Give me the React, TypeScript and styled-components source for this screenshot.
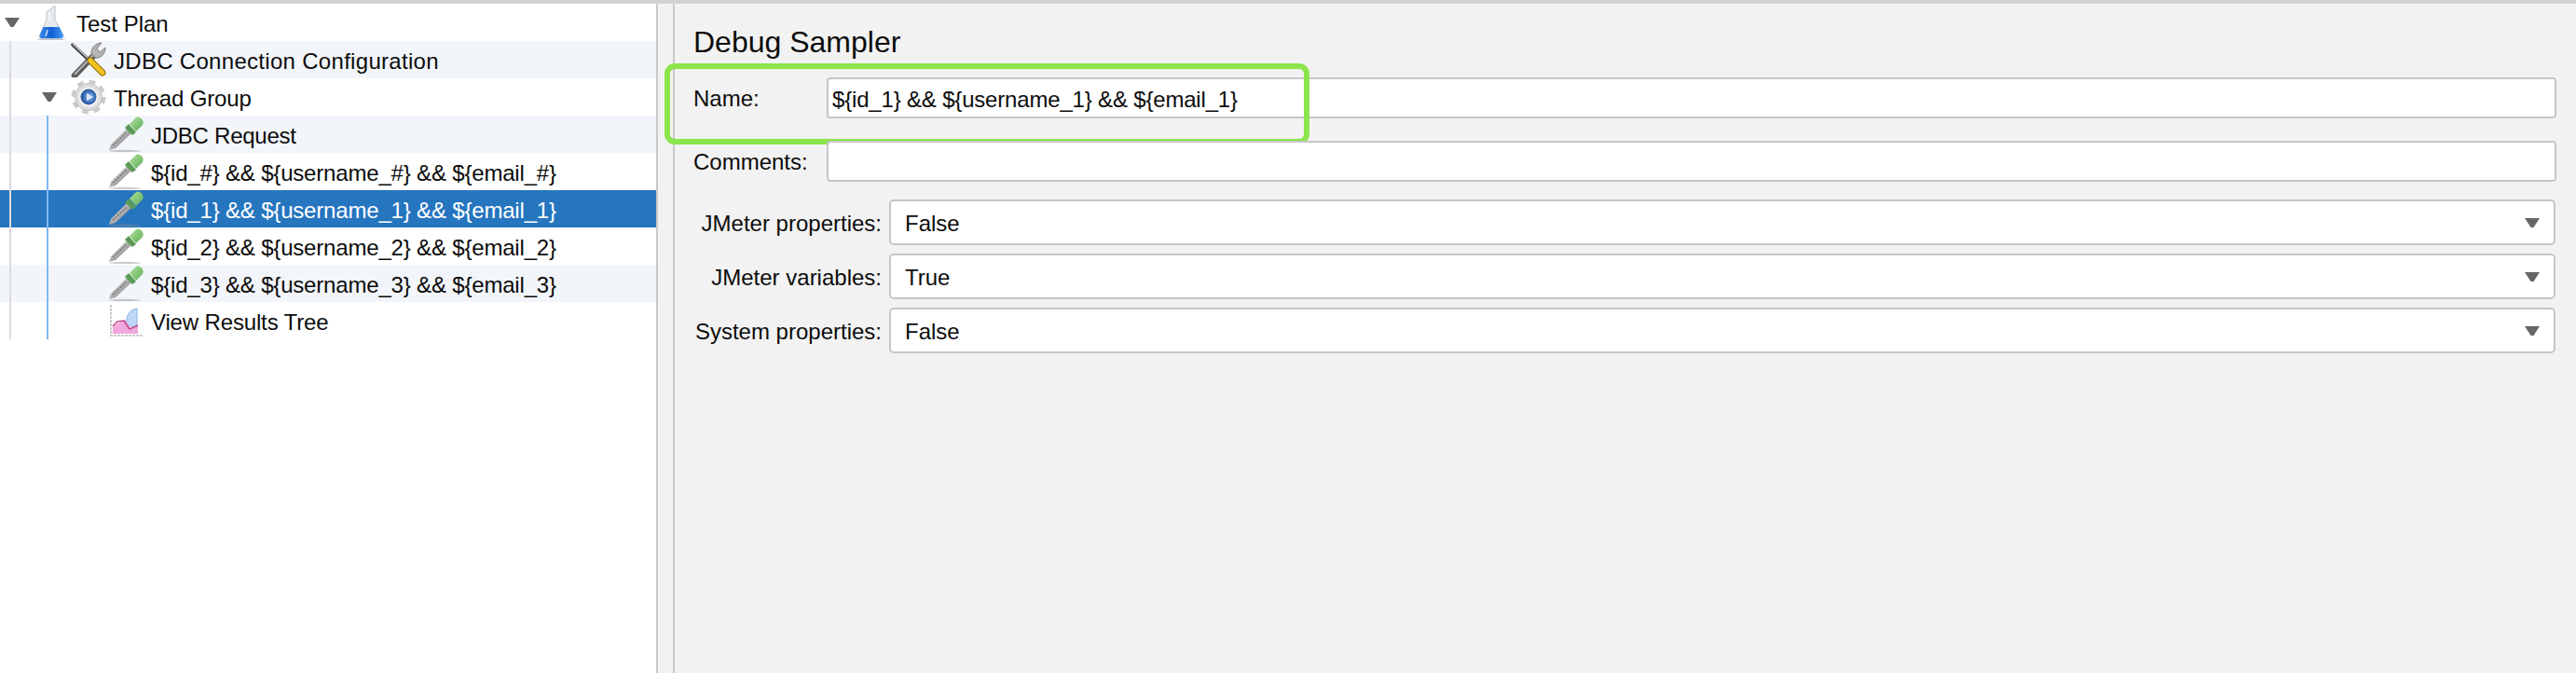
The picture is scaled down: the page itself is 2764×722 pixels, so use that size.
import React from 'react';
import styled, { createGlobalStyle } from 'styled-components';

const Global = createGlobalStyle`
  html, body { margin: 0; padding: 0; height: 100%; overflow: hidden; background: #fff; }
  #root { height: 100%; }
  * { box-sizing: border-box; }
`;

const Shell = styled.div`
  display: flex;
  height: 722px;
  width: 2764px;
  border-top: 4px solid #d2d2d2;
  font-family: "Liberation Sans", Arial, sans-serif;
  font-size: 24px;
  color: #0c0c0c;
`;

const TreePane = styled.div`
  position: relative;
  flex: 0 0 704px;
  background: #fff;
`;

const Row = styled.div<{ $depth: number; $striped?: boolean; $selected?: boolean }>`
  display: flex;
  align-items: center;
  height: 40px;
  padding-left: ${p => p.$depth * 40 + 4}px;
  background: ${p => (p.$selected ? '#2675bf' : p.$striped ? '#f2f5fa' : '#fff')};
  color: ${p => (p.$selected ? '#fff' : '#0c0c0c')};
`;

const ArrowSlot = styled.span`
  display: flex;
  align-items: center;
  flex: 0 0 32px;
  padding-left: 1px;
  height: 100%;
`;

const IconSlot = styled.span`
  display: flex;
  flex: 0 0 38px;
  height: 38px;
  margin-right: 8px;
  filter: blur(0.4px);
`;

const Label = styled.span<{ $tracking: number }>`
  white-space: pre;
  line-height: 40px;
  padding-top: 3px;
  letter-spacing: ${p => p.$tracking}px;
`;

const Guide = styled.div<{ $left: number; $top: number; $color: string }>`
  position: absolute;
  left: ${p => p.$left}px;
  top: ${p => p.$top}px;
  bottom: 358px;
  width: 2px;
  background: ${p => p.$color};
`;

const Splitter = styled.div`
  flex: 0 0 20px;
  background: #f2f2f2;
  border-left: 2px solid #c9c9c9;
  border-right: 2px solid #c9c9c9;
`;

const FormPane = styled.div`
  flex: 1;
  display: flex;
  flex-direction: column;
  background: #f2f2f2;
  padding: 0 21px 0 20px;
`;

const Title = styled.h1`
  margin: 0;
  height: 79px;
  padding-top: 21px;
  font-size: 32px;
  line-height: 40px;
  font-weight: 400;
`;

const TextRow = styled.div`
  position: relative;
  display: flex;
  align-items: center;
  height: 44px;
  margin-bottom: 24px;
`;

const TextLabel = styled.label`
  flex: 0 0 143px;
  padding-top: 2px;
`;

const Field = styled.div`
  flex: 1;
  height: 44px;
  line-height: 43px;
  padding-left: 4px;
  background: #fff;
  border: 2px solid #c6c6c6;
  border-radius: 4px;
  white-space: pre;
  letter-spacing: -0.18px;
`;

const ComboList = styled.div`
  display: flex;
  flex-direction: column;
  gap: 9px;
  margin-top: -5px;
  padding-right: 1px;
`;

const ComboRow = styled.div`
  display: flex;
  align-items: center;
  gap: 8px;
`;

const ComboLabel = styled.label`
  flex: 0 0 202px;
  text-align: right;
  padding-top: 2px;
`;

const Combo = styled.div`
  flex: 1;
  display: flex;
  align-items: center;
  justify-content: space-between;
  height: 49px;
  padding: 0 14px 0 15px;
  background: #fff;
  border: 2px solid #c6c6c6;
  border-radius: 5px;
`;

const ComboValue = styled.span`
  padding-top: 2px;
`;

const ComboCaret = styled.span`
  display: flex;
  margin-right: 1px;
`;

const Highlight = styled.div`
  position: absolute;
  left: -31px;
  top: -15px;
  width: 692px;
  height: 87px;
  border: 6px solid #8ae64a;
  border-radius: 11px;
  pointer-events: none;
`;

const Caret = () => (
  <svg width="16" height="10" viewBox="0 0 16 10">
    <path d="M0 0H16L9.500 10H6.500Z" fill="#666" />
  </svg>
);

const Flask = () => (
  <svg width="38" height="38" viewBox="0 0 38 38">
    <defs>
      <linearGradient id="fl" x1="0" x2="1">
        <stop offset="0" stopColor="#3a8ae8" />
        <stop offset="0.5" stopColor="#0f5fd6" />
        <stop offset="1" stopColor="#4a9af0" />
      </linearGradient>
    </defs>
    <ellipse cx="19" cy="37" rx="15" ry="1.500" fill="#aab0b8" opacity="0.7" />
    <path d="M14 8 L23 1 V16 L32 33 Q32 36 29 36 H9 Q6 36 6.500 33 L14 16 Z" fill="#e6eaef" stroke="#c0c5cc" strokeWidth="1" />
    <path d="M10.500 24 H27.800 L32 33 Q32 36 29 36 H9 Q6 36 6.500 33 Z" fill="url(#fl)" />
    <path d="M17 8 V17 M15 27 L13 34" stroke="#fff" strokeWidth="1.500" opacity="0.75" fill="none" />
  </svg>
);

const Tools = () => (
  <svg width="38" height="38" viewBox="0 0 38 38">
    <path d="M2 3 L21 21" stroke="#3b3b3b" strokeWidth="3.500" strokeLinecap="round" />
    <path d="M2 2 L20 19" stroke="#d0d0d0" strokeWidth="1.200" />
    <path d="M4 36 L27 12" stroke="#5a5a5a" strokeWidth="6.500" strokeLinecap="round" />
    <path d="M4 35 L26 12" stroke="#b5b5b5" strokeWidth="2" />
    <path d="M22 12 C22 6 27 1 33 1 L28 7 L31 11 L37 6 C37 13 32 18 26 17 Z" fill="#b4b4b4" stroke="#808080" strokeWidth="1" />
    <path d="M21 20 L34 33" stroke="#8f6f10" strokeWidth="7" strokeLinecap="round" />
    <path d="M21 20 L34 33" stroke="#f4c21e" strokeWidth="5" strokeLinecap="round" />
  </svg>
);

const Gear = () => (
  <svg width="38" height="38" viewBox="0 0 38 38">
    <defs>
      <radialGradient id="gb" cx="0.55" cy="0.5" r="0.6">
        <stop offset="0" stopColor="#a8c8f0" />
        <stop offset="0.6" stopColor="#3a6db6" />
        <stop offset="1" stopColor="#24508f" />
      </radialGradient>
    </defs>
    <circle cx="19" cy="19" r="16.500" fill="none" stroke="#cccccc" strokeWidth="4" strokeDasharray="7 5.960" />
    <circle cx="19" cy="19" r="14.500" fill="#dedede" stroke="#bcbcbc" strokeWidth="1" />
    <circle cx="19" cy="19" r="10.500" fill="#f4f4f4" />
    <circle cx="19" cy="19" r="8.500" fill="url(#gb)" />
    <path d="M17 15 L24 19 L17 23 Z" fill="#dbe8fa" />
  </svg>
);

const Dropper = () => (
  <svg width="38" height="38" viewBox="0 0 38 38">
    <defs>
      <linearGradient id="dg" x1="0" y1="0" x2="1" y2="1">
        <stop offset="0" stopColor="#f6f6f6" />
        <stop offset="0.55" stopColor="#a8a8a8" />
        <stop offset="1" stopColor="#555" />
      </linearGradient>
      <linearGradient id="dv" x1="0" y1="0" x2="1" y2="1">
        <stop offset="0" stopColor="#b0e29c" />
        <stop offset="1" stopColor="#5cab56" />
      </linearGradient>
    </defs>
    <ellipse cx="18" cy="37" rx="17" ry="1.200" fill="#8c8c8c" opacity="0.45" />
    <path d="M1 36 L3 30 L20 13 L25 18 L8 34 Z" fill="url(#dg)" />
    <path d="M5 31 L20 17" stroke="#666" strokeWidth="1.200" strokeDasharray="2 1.500" />
    <path d="M18 12 L26 20 L30 17 L22 8 Z" fill="#5b9a56" />
    <path d="M23 8 L29 2 Q32 -1 36 2.500 Q39 6 36.500 9.500 L30 16 Z" fill="url(#dv)" />
  </svg>
);

const Chart = () => (
  <svg width="38" height="38" viewBox="0 0 38 38">
    <path d="M3 2 V35 H37" fill="none" stroke="#b9b9b9" strokeWidth="1.500" strokeDasharray="3 1" />
    <path d="M19 22 Q20 7 31 6 V28 Z" fill="#bcd7f7" stroke="#8fb6e8" strokeWidth="1" />
    <path d="M5 33 V25 L18 18 L25 28 L32 24 V33 Z" fill="#f2a8dc" />
    <path d="M5 25 L10 20 L17 19 L23 28 L32 24" fill="none" stroke="#c04a8c" strokeWidth="1.500" />
  </svg>
);

type Item = {
  depth: number;
  text: string;
  icon: React.ReactNode;
  tracking: number;
  open?: boolean;
  striped?: boolean;
  selected?: boolean;
};

const items: Item[] = [
  { depth: 0, text: 'Test Plan', icon: <Flask />, tracking: 0, open: true },
  { depth: 1, text: 'JDBC Connection Configuration', icon: <Tools />, tracking: 0.3, striped: true },
  { depth: 1, text: 'Thread Group', icon: <Gear />, tracking: -0.15, open: true },
  { depth: 2, text: 'JDBC Request', icon: <Dropper />, tracking: -0.25, striped: true },
  { depth: 2, text: '${id_#} && ${username_#} && ${email_#}', icon: <Dropper />, tracking: -0.18 },
  { depth: 2, text: '${id_1} && ${username_1} && ${email_1}', icon: <Dropper />, tracking: -0.18, selected: true },
  { depth: 2, text: '${id_2} && ${username_2} && ${email_2}', icon: <Dropper />, tracking: -0.18 },
  { depth: 2, text: '${id_3} && ${username_3} && ${email_3}', icon: <Dropper />, tracking: -0.18, striped: true },
  { depth: 2, text: 'View Results Tree', icon: <Chart />, tracking: -0.15 },
];

const combos = [
  { label: 'JMeter properties:', value: 'False' },
  { label: 'JMeter variables:', value: 'True' },
  { label: 'System properties:', value: 'False' },
];

export default function App() {
  return (
    <>
      <Global />
      <Shell>
        <TreePane>
          {items.map(item => (
            <Row key={item.text} $depth={item.depth} $striped={item.striped} $selected={item.selected}>
              <ArrowSlot>{item.open && <Caret />}</ArrowSlot>
              <IconSlot>{item.icon}</IconSlot>
              <Label $tracking={item.tracking}>{item.text}</Label>
            </Row>
          ))}
          <Guide $left={10} $top={40} $color="#dcdcdc" />
          <Guide $left={50} $top={120} $color="#7fb8f2" />
        </TreePane>
        <Splitter />
        <FormPane>
          <Title>Debug Sampler</Title>
          <TextRow>
            <TextLabel>Name:</TextLabel>
            <Field>{'${id_1} && ${username_1} && ${email_1}'}</Field>
            <Highlight />
          </TextRow>
          <TextRow>
            <TextLabel>Comments:</TextLabel>
            <Field />
          </TextRow>
          <ComboList>
            {combos.map(c => (
              <ComboRow key={c.label}>
                <ComboLabel>{c.label}</ComboLabel>
                <Combo>
                  <ComboValue>{c.value}</ComboValue>
                  <ComboCaret><Caret /></ComboCaret>
                </Combo>
              </ComboRow>
            ))}
          </ComboList>
        </FormPane>
      </Shell>
    </>
  );
}
